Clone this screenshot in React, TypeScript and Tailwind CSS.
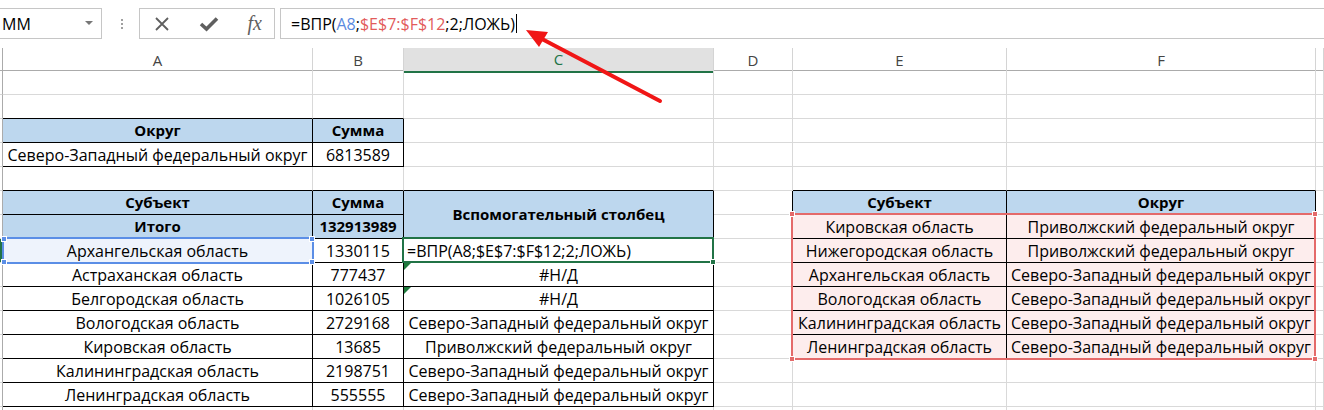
import React from "react";

interface CellDef {
  text: string;
  hdr?: boolean;
  left?: boolean;
  pink?: boolean;
}

const SZ = "Северо-Западный федеральный округ";
const PV = "Приволжский федеральный округ";
const FORMULA = "=ВПР(A8;$E$7:$F$12;2;ЛОЖЬ)";

// row-col, columns: 1=A 2=B 3=C 4=D 5=E 6=F
const cells: Record<string, CellDef> = {
  "3-1": { text: "Округ", hdr: true },
  "3-2": { text: "Сумма", hdr: true },
  "4-1": { text: SZ },
  "4-2": { text: "6813589" },
  "6-1": { text: "Субъект", hdr: true },
  "6-2": { text: "Сумма", hdr: true },
  "6-3": { text: "Вспомогательный столбец", hdr: true },
  "6-5": { text: "Субъект", hdr: true },
  "6-6": { text: "Округ", hdr: true },
  "7-1": { text: "Итого", hdr: true },
  "7-2": { text: "132913989", hdr: true },
  "7-5": { text: "Кировская область", pink: true },
  "7-6": { text: PV, pink: true },
  "8-1": { text: "Архангельская область" },
  "8-2": { text: "1330115" },
  "8-3": { text: FORMULA, left: true },
  "8-5": { text: "Нижегородская область", pink: true },
  "8-6": { text: PV, pink: true },
  "9-1": { text: "Астраханская область" },
  "9-2": { text: "777437" },
  "9-3": { text: "#Н/Д" },
  "9-5": { text: "Архангельская область", pink: true },
  "9-6": { text: SZ, pink: true },
  "10-1": { text: "Белгородская область" },
  "10-2": { text: "1026105" },
  "10-3": { text: "#Н/Д" },
  "10-5": { text: "Вологодская область", pink: true },
  "10-6": { text: SZ, pink: true },
  "11-1": { text: "Вологодская область" },
  "11-2": { text: "2729168" },
  "11-3": { text: SZ },
  "11-5": { text: "Калининградская область", pink: true },
  "11-6": { text: SZ, pink: true },
  "12-1": { text: "Кировская область" },
  "12-2": { text: "13685" },
  "12-3": { text: PV },
  "12-5": { text: "Ленинградская область", pink: true },
  "12-6": { text: SZ, pink: true },
  "13-1": { text: "Калининградская область" },
  "13-2": { text: "2198751" },
  "13-3": { text: SZ },
  "14-1": { text: "Ленинградская область" },
  "14-2": { text: "555555" },
  "14-3": { text: SZ },
};

const tables = [
  { r1: 3, r2: 4, c1: 1, c2: 2 },
  { r1: 6, r2: 14, c1: 1, c2: 3 },
  { r1: 6, r2: 12, c1: 5, c2: 6 },
];

const inTable = (r: number, c: number) =>
  tables.some((t) => r >= t.r1 && r <= t.r2 && c >= t.c1 && c <= t.c2);

const Corner = ({ className }: { className: string }) => (
  <span className={"absolute w-[6px] h-[6px] border border-white " + className} />
);

function ErrorMark() {
  return (
    <svg className="absolute left-0 top-0" width="7" height="7" viewBox="0 0 7 7">
      <polygon points="0,0 7,0 0,7" fill="#1e7a3c" />
    </svg>
  );
}

function FormulaBar() {
  return (
    <div className="h-[48px] flex items-start pt-[8px] bg-white">
      {/* name box */}
      <div className="w-[102px] h-[31px] border border-l-0 border-[#c6c6c6] flex items-center overflow-hidden relative">
        <span className="pl-[2px] text-[16px] text-black whitespace-nowrap">ММ</span>
        <span className="absolute left-[85px] top-[12px] w-0 h-0 border-l-[4px] border-r-[4px] border-t-[4px] border-l-transparent border-r-transparent border-t-[#777]" />
      </div>
      {/* dots */}
      <div className="w-[37px] h-[31px] flex flex-col items-center justify-center gap-[2px] pl-[2px]">
        <span className="w-[2px] h-[2px] bg-[#a0a0a0]" />
        <span className="w-[2px] h-[2px] bg-[#a0a0a0]" />
        <span className="w-[2px] h-[2px] bg-[#a0a0a0]" />
      </div>
      {/* cancel / enter / fx */}
      <div className="w-[136px] h-[31px] border border-[#c6c6c6] flex items-center justify-between pl-[14px] pr-[12px]">
        <svg width="16" height="16" viewBox="0 0 16 16">
          <path d="M2 2 L14 14 M14 2 L2 14" stroke="#5f5f5f" strokeWidth="1.8" fill="none" />
        </svg>
        <svg width="20" height="16" viewBox="0 0 20 16">
          <path d="M2 8 L7.5 13 L18 2.5" stroke="#5f5f5f" strokeWidth="3.6" fill="none" />
        </svg>
        <span className="font-['Liberation_Serif',serif] italic text-[20px] text-[#5f5f5f] leading-none -mt-[2px]">fx</span>
      </div>
      {/* formula input */}
      <div className="ml-[5px] flex-1 h-[31px] border border-r-0 border-[#c6c6c6] flex items-center pl-[10px] text-[16px] text-black whitespace-nowrap">
        <span>=ВПР(</span>
        <span className="text-[#5a8ae0]">A8</span>
        <span>;</span>
        <span className="text-[#e25b5b]">$E$7:$F$12</span>
        <span>;2;ЛОЖЬ)</span>
        <span className="ml-[1px] w-px h-[19px] bg-black" />
      </div>
    </div>
  );
}

function ColumnHeaders() {
  const cols = ["A", "B", "C", "D", "E", "F", ""];
  return (
    <div className="grid grid-cols-[3px_310px_91px_310px_79px_214px_309px_8px] h-[23px] border-b border-[#ababab] text-[15px] text-[#444]">
      <div className="border-r border-[#ababab]" />
      {cols.map((c) =>
        c === "C" ? (
          <div
            key={c}
            className="bg-[#e1e1e1] border-r border-[#d4d4d4] border-b-2 border-b-[#217346] text-[#217346] flex items-center justify-center"
          >
            C
          </div>
        ) : (
          <div key={c || "g"} className="border-r border-[#d4d4d4] flex items-center justify-center">
            {c}
          </div>
        )
      )}
    </div>
  );
}

function Sheet() {
  const out: React.ReactNode[] = [];
  for (let r = 1; r <= 15; r++) {
    for (let c = 0; c <= 7; c++) {
      if (c === 0) {
        out.push(
          <div
            key={`${r}-0`}
            className={
              "border-r border-b border-r-[#ababab] border-b-[#d4d4d4] " +
              (r === 8 ? "bg-[#217346]" : "")
            }
          />
        );
        continue;
      }
      if (r === 7 && c === 3) continue;
      const merged = r === 6 && c === 3;
      const bottomRow = merged ? 7 : r;
      const rightBlack = inTable(r, c) || inTable(r, c + 1);
      const bottomBlack = inTable(bottomRow, c) || inTable(bottomRow + 1, c);
      const def = cells[`${r}-${c}`];
      let bg = "";
      if (def?.hdr) bg = "bg-[#bdd7ee] font-bold text-[15px]";
      else if (def?.pink) bg = "bg-[#fdeded]";
      else if (r === 8 && c === 1) bg = "bg-[#eef3fc]";
      out.push(
        <div
          key={`${r}-${c}`}
          className={
            "relative flex items-center whitespace-nowrap border-r border-b " +
            (rightBlack ? "border-r-black " : "border-r-[#d9d9d9] ") +
            (bottomBlack ? "border-b-black " : "border-b-[#d9d9d9] ") +
            (def?.left ? "justify-start pl-[3px] " : "justify-center ") +
            (merged ? "row-span-2 " : "") +
            bg
          }
        >
          {def?.text}
          {r === 8 && c === 1 && (
            <span className="absolute -left-px -top-[2px] -right-[2px] -bottom-[2px] border-2 border-[#5b8ee6] z-10">
              <Corner className="-left-[3px] -top-[3px] bg-[#5b8ee6]" />
              <Corner className="-right-[3px] -top-[3px] bg-[#5b8ee6]" />
              <Corner className="-left-[3px] -bottom-[3px] bg-[#5b8ee6]" />
              <Corner className="-right-[3px] -bottom-[3px] bg-[#5b8ee6]" />
            </span>
          )}
          {r === 8 && c === 3 && (
            <span className="absolute -left-[2px] -top-[2px] -right-px -bottom-px border-2 border-[#217346] z-10">
              <span className="absolute -right-[4px] -bottom-[4px] w-[6px] h-[6px] bg-[#217346] border border-white" />
            </span>
          )}
          {(r === 9 || r === 10) && c === 3 && <ErrorMark />}
          {r === 7 && c === 5 && (
            <span className="absolute -left-[2px] -top-[2px] w-[525px] h-[147px] border-2 border-[#e46a6a] z-10">
              <Corner className="-left-[4px] -top-[4px] bg-[#e46a6a]" />
              <Corner className="-right-[4px] -top-[4px] bg-[#e46a6a]" />
              <Corner className="-left-[4px] -bottom-[4px] bg-[#e46a6a]" />
              <Corner className="-right-[4px] -bottom-[4px] bg-[#e46a6a]" />
            </span>
          )}
        </div>
      );
    }
  }
  return (
    <div className="grid grid-cols-[3px_310px_91px_310px_79px_214px_309px_8px] auto-rows-[24px] text-[16px] text-black">
      {out}
    </div>
  );
}

export default function App() {
  return (
    <div className="relative w-[1324px] h-[410px] overflow-hidden bg-white font-['Open_Sans',sans-serif]">
      <FormulaBar />
      <ColumnHeaders />
      <Sheet />
      {/* red arrow pointing at the formula */}
      <svg className="absolute left-0 top-0 z-20 pointer-events-none" width="1324" height="410">
        <line x1="660" y1="101" x2="542" y2="39" stroke="#f01616" strokeWidth="4" strokeLinecap="round" />
        <polygon points="526,30 548,32 539,47" fill="#f01616" />
      </svg>
    </div>
  );
}
